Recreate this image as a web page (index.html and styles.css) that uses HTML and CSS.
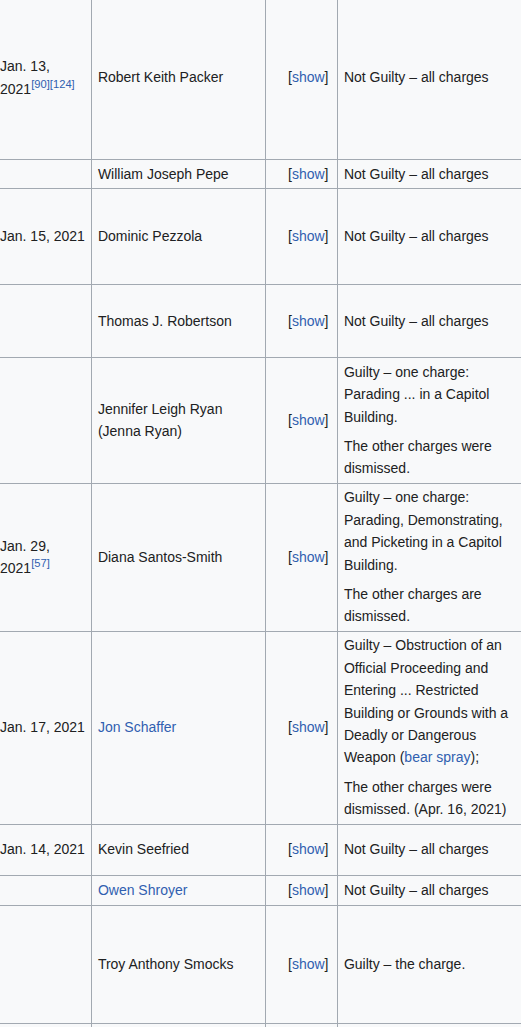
FILE: index.html
```html
<!DOCTYPE html>
<html>
<head>
<meta charset="utf-8">
<link rel="stylesheet" href="styles.css">
</head>
<body>
<table class="wikitable">
  <colgroup>
    <col class="c-date"><col class="c-name"><col class="c-show"><col class="c-result">
  </colgroup>
  <tbody>
    <tr class="r1">
      <td class="date">Jan. 13, 2021<sup class="ref"><a>[90]</a></sup><sup class="ref"><a>[124]</a></sup></td>
      <td>Robert Keith Packer</td>
      <td class="show">[<a>show</a>]</td>
      <td>Not Guilty – all charges</td>
    </tr>
    <tr class="r2">
      <td class="date"></td>
      <td>William Joseph Pepe</td>
      <td class="show">[<a>show</a>]</td>
      <td>Not Guilty – all charges</td>
    </tr>
    <tr class="r3">
      <td class="date">Jan. 15, 2021</td>
      <td>Dominic Pezzola</td>
      <td class="show">[<a>show</a>]</td>
      <td>Not Guilty – all charges</td>
    </tr>
    <tr class="r4">
      <td class="date"></td>
      <td>Thomas J. Robertson</td>
      <td class="show">[<a>show</a>]</td>
      <td>Not Guilty – all charges</td>
    </tr>
    <tr class="r5">
      <td class="date"></td>
      <td>Jennifer Leigh Ryan (Jenna Ryan)</td>
      <td class="show">[<a>show</a>]</td>
      <td class="result"><p>Guilty – one charge: Parading ... in a Capitol Building.</p><p>The other charges were dismissed.</p></td>
    </tr>
    <tr class="r6">
      <td class="date">Jan. 29, 2021<sup class="ref"><a>[57]</a></sup></td>
      <td>Diana Santos-Smith</td>
      <td class="show">[<a>show</a>]</td>
      <td class="result"><p>Guilty – one charge: Parading, Demonstrating, and Picketing in a Capitol Building.</p><p>The other charges are dismissed.</p></td>
    </tr>
    <tr class="r7">
      <td class="date">Jan. 17, 2021</td>
      <td><a>Jon Schaffer</a></td>
      <td class="show">[<a>show</a>]</td>
      <td class="result"><p>Guilty – Obstruction of an Official Proceeding and Entering ... Restricted Building or Grounds with a Deadly or Dangerous Weapon (<a>bear spray</a>);</p><p>The other charges were dismissed. (Apr. 16, 2021)</p></td>
    </tr>
    <tr class="r8">
      <td class="date">Jan. 14, 2021</td>
      <td>Kevin Seefried</td>
      <td class="show">[<a>show</a>]</td>
      <td>Not Guilty – all charges</td>
    </tr>
    <tr class="r9">
      <td class="date"></td>
      <td><a>Owen Shroyer</a></td>
      <td class="show">[<a>show</a>]</td>
      <td>Not Guilty – all charges</td>
    </tr>
    <tr class="r10">
      <td class="date"></td>
      <td>Troy Anthony Smocks</td>
      <td class="show">[<a>show</a>]</td>
      <td>Guilty – the charge.</td>
    </tr>
    <tr class="r11">
      <td class="date"></td>
      <td>&nbsp;</td>
      <td class="show">&nbsp;</td>
      <td>&nbsp;</td>
    </tr>
  </tbody>
</table>
</body>
</html>
```
FILE: styles.css
```css
html, body {
  margin: 0;
  padding: 0;
  background: #f8f9fa;
  overflow: hidden;
}
body {
  font-family: "Liberation Sans", Arial, sans-serif;
  font-size: 14px;
  line-height: 22.4px;
  color: #202122;
}
.wikitable {
  border-collapse: collapse;
  table-layout: fixed;
  width: 700px;
  margin-top: -5px;
  background: #f8f9fa;
}
.c-date { width: 91px; }
.c-name { width: 174px; }
.c-show { width: 72px; }
.c-result { width: 363px; }
.wikitable td {
  border: 1px solid #a2a9b1;
  padding: 2.8px 5.6px 2.8px 6.4px;
  vertical-align: middle;
  text-align: left;
}
.wikitable td.date {
  border-left: none;
  padding-left: 0;
}
.wikitable td.show {
  text-align: right;
  padding-right: 8px;
}
.wikitable tr > td:last-child {
  padding-right: 190px;
}
.wikitable td.result p {
  margin: 0 0 7px 0;
}
.wikitable td.result p:last-child {
  margin-bottom: 0;
}
a {
  color: #3060b0;
  text-decoration: none;
}
sup.ref {
  font-size: 11.2px;
  line-height: 1;
  vertical-align: super;
}
.r1 { height: 164px; }
.r2 { height: 29px; }
.r3 { height: 96px; }
.r4 { height: 73px; }
.r8 { height: 51px; }
.r9 { height: 30px; }
.r10 { height: 118px; }
.r11 { height: 30px; }
```
